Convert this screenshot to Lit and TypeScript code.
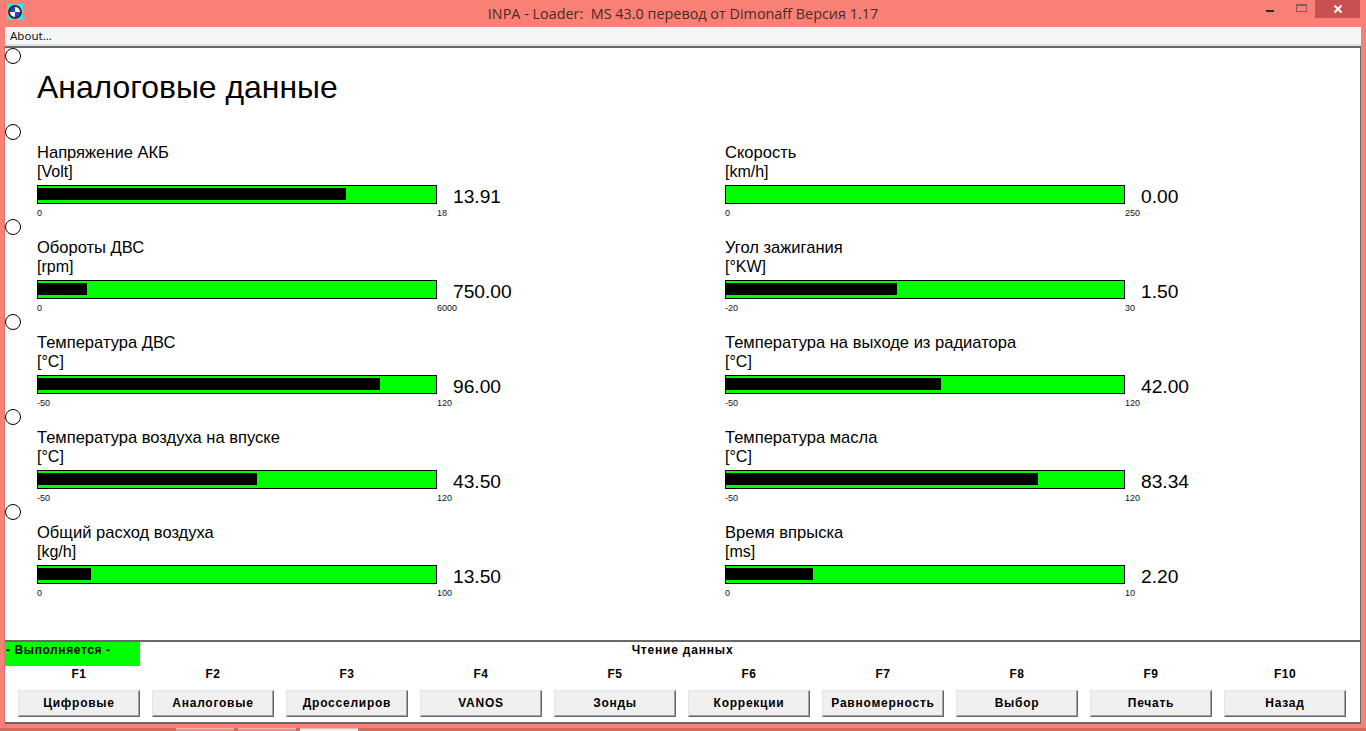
import { LitElement, html, css } from "lit";
import { customElement } from "lit/decorators.js";

interface Gauge { label: string; unit: string; min: number; max: number; value: number; }

const LEFT: Gauge[] = [
  { label: "Напряжение АКБ", unit: "[Volt]", min: 0, max: 18, value: 13.91 },
  { label: "Обороты ДВС", unit: "[rpm]", min: 0, max: 6000, value: 750 },
  { label: "Температура ДВС", unit: "[°C]", min: -50, max: 120, value: 96 },
  { label: "Температура воздуха на впуске", unit: "[°C]", min: -50, max: 120, value: 43.5 },
  { label: "Общий расход воздуха", unit: "[kg/h]", min: 0, max: 100, value: 13.5 },
];
const RIGHT: Gauge[] = [
  { label: "Скорость", unit: "[km/h]", min: 0, max: 250, value: 0 },
  { label: "Угол зажигания", unit: "[°KW]", min: -20, max: 30, value: 1.5 },
  { label: "Температура на выходе из радиатора", unit: "[°C]", min: -50, max: 120, value: 42 },
  { label: "Температура масла", unit: "[°C]", min: -50, max: 120, value: 83.34 },
  { label: "Время впрыска", unit: "[ms]", min: 0, max: 10, value: 2.2 },
];
const KEYS = ["Цифровые", "Аналоговые", "Дросселиров", "VANOS", "Зонды", "Коррекции", "Равномерность", "Выбор", "Печать", "Назад"];

@customElement("app-root")
export class AppRoot extends LitElement {
  static styles = css`
    :host { display: block; width: 1366px; height: 731px; overflow: hidden; background: #f98075; font-family: "Liberation Sans", Arial, sans-serif; color: #000; }
    .titlebar { height: 27px; display: grid; grid-template-columns: 1fr auto 1fr; align-items: center; }
    .tl { display: flex; padding-left: 7px; }
    .tl svg { display: block; margin-top: -4px; }
    .title { font: 14.4px "Open Sans", "Noto Sans", sans-serif; color: #4a2a26; white-space: pre; margin-top: -1px; }
    .ctl { display: flex; justify-content: flex-end; align-items: flex-start; height: 27px; padding-right: 6px; }
    .ctl .min { width: 24px; display: flex; justify-content: center; margin-top: 10px; margin-right: 14px; }
    .ctl .min i { display: block; width: 8px; height: 2px; background: #2a2a2a; }
    .ctl .max { width: 8px; height: 5px; border: 1px solid #8a5a55; border-top-width: 2px; margin-top: 4px; margin-right: 8px; padding: 0 0.5px; }
    .ctl .close { width: 45px; height: 18px; background: #c75050; display: flex; align-items: center; justify-content: center; }
    .menu { height: 19px; margin: 0 5px; background: #f5f6f7; border-bottom: 2px solid #e2e3e3; box-sizing: border-box; padding-left: 5px; font: 11.5px/17px "Noto Sans", sans-serif; color: #111; }
    .client { margin: 0 5px; background: #fff; border-top: 2px solid #696969; border-right: 1px solid #696969; border-bottom: 2px solid #696969; display: flex; flex-direction: column; height: 674px; box-shadow: -1px 0 0 #dd7268; }
    .main { height: 592px; display: grid; grid-template-columns: 32px 688px 1fr; border-bottom: 2px solid #696969; }
    .dots { display: flex; flex-direction: column; }
    .dot { width: 16px; height: 16px; box-sizing: border-box; border: 1px solid #000; border-radius: 50%; background: #fff; margin-top: 79px; }
    .dot:first-child { margin-top: 0; }
    .dot:nth-child(2) { margin-top: 60px; }
    .heading { grid-column: 2 / 4; }
    h1 { margin: 19px 0 0; font-size: 31.9px; line-height: 40px; font-weight: 400; height: 76px; }
    .cols { display: grid; grid-template-columns: 688px 1fr; }
    .g { height: 95px; }
    .g .lb { font-size: 16.55px; line-height: 19px; height: 19px; }
    .g .un { font-size: 16px; line-height: 19px; height: 22px; }
    .row { display: grid; grid-template-columns: 400px auto; column-gap: 16px; justify-content: start; align-items: center; }
    .bar { height: 19px; box-sizing: border-box; box-shadow: inset 0 0 0 1px #000; background: #00ff00; padding: 3px 0 4px; margin-top: -1px; }
    .fill { height: 100%; background: #000; }
    .val { font-size: 19.2px; line-height: 19px; margin-top: 3px; }
    .scale { display: grid; grid-template-columns: 400px auto; justify-content: start; font-size: 9px; line-height: 12px; margin-top: 1px; color: #111; }
    .status { display: grid; grid-template-columns: 135px 1fr 135px; height: 24px; font: bold 12px/16px "Liberation Sans", sans-serif; letter-spacing: 0.6px; }
    .state { background: #00ff00; height: 24px; padding-left: 1px; }
    .msg { text-align: center; letter-spacing: 0.8px; }
    .keys { display: grid; grid-template-columns: repeat(10, 122px); column-gap: 12px; padding-left: 13px; }
    .key { display: flex; flex-direction: column; align-items: center; }
    .fk { font: bold 12px/16px "Liberation Sans", sans-serif; height: 24px; letter-spacing: 0.5px; }
    button { width: 122px; height: 27px; box-sizing: border-box; padding: 0 0 2px; background: #f0f0f0; border: 1px solid; border-color: #e3e3e3 #696969 #696969 #e3e3e3; box-shadow: inset -1px -1px 0 #a0a0a0; font: bold 12px "Liberation Sans", sans-serif; letter-spacing: 0.75px; color: #000; }
    .task { height: 3px; margin-top: 4px; background: #cf6a60; display: flex; padding-left: 176px; gap: 4px; align-items: flex-start; }
    .task i { display: block; width: 58px; height: 3px; box-sizing: border-box; border-top: 1px solid #f0b5ae; background: #eb9088; }
    .task i:last-child { background: #fbe9e6; }
  `;

  private gauge(g: Gauge) {
    const px = Math.floor(((g.value - g.min) / (g.max - g.min)) * 400);
    return html`<div class="g">
      <div class="lb">${g.label}</div>
      <div class="un">${g.unit}</div>
      <div class="row">
        <div class="bar"><div class="fill" style="width:${px}px"></div></div>
        <div class="val">${g.value.toFixed(2)}</div>
      </div>
      <div class="scale"><span>${g.min}</span><span>${g.max}</span></div>
    </div>`;
  }

  render() {
    return html`
      <div class="titlebar">
        <div class="tl">
          <svg width="16" height="16" viewBox="0 0 16 16">
            <rect width="16" height="16" fill="#00ffff"/>
            <circle cx="8" cy="8" r="7.5" fill="#333"/>
            <circle cx="8" cy="8" r="7.5" fill="none" stroke="#bbb" stroke-width="1"/>
            <path d="M8 8V3a5 5 0 0 0-5 5z" fill="#1c3fe0"/>
            <path d="M8 8h5a5 5 0 0 0-5-5z" fill="#fff"/>
            <path d="M8 8v5a5 5 0 0 0 5-5z" fill="#1c3fe0"/>
            <path d="M8 8H3a5 5 0 0 0 5 5z" fill="#fff"/>
          </svg>
        </div>
        <div class="title">INPA - Loader:  MS 43.0 перевод от Dimonaff Версия 1.17</div>
        <div class="ctl">
          <div class="min"><i></i></div>
          <div class="max"></div>
          <div class="close">
            <svg width="10" height="10" viewBox="0 0 10 10"><path d="M1.5 1.5l7 7M8.5 1.5l-7 7" stroke="#fff" stroke-width="2" fill="none"/></svg>
          </div>
        </div>
      </div>
      <div class="menu">About...</div>
      <div class="client">
        <div class="main">
          <div class="dots">${[0, 1, 2, 3, 4, 5].map(() => html`<div class="dot"></div>`)}</div>
          <div class="heading">
            <h1>Аналоговые данные</h1>
            <div class="cols">
              <div>${LEFT.map((g) => this.gauge(g))}</div>
              <div>${RIGHT.map((g) => this.gauge(g))}</div>
            </div>
          </div>
        </div>
        <div class="status">
          <div class="state">- Выполняется -</div>
          <div class="msg">Чтение данных</div>
          <div></div>
        </div>
        <div class="keys">
          ${KEYS.map((k, i) => html`<div class="key"><div class="fk">F${i + 1}</div><button>${k}</button></div>`)}
        </div>
      </div>
      <div class="task"><i></i><i></i><i></i></div>
    `;
  }
}
